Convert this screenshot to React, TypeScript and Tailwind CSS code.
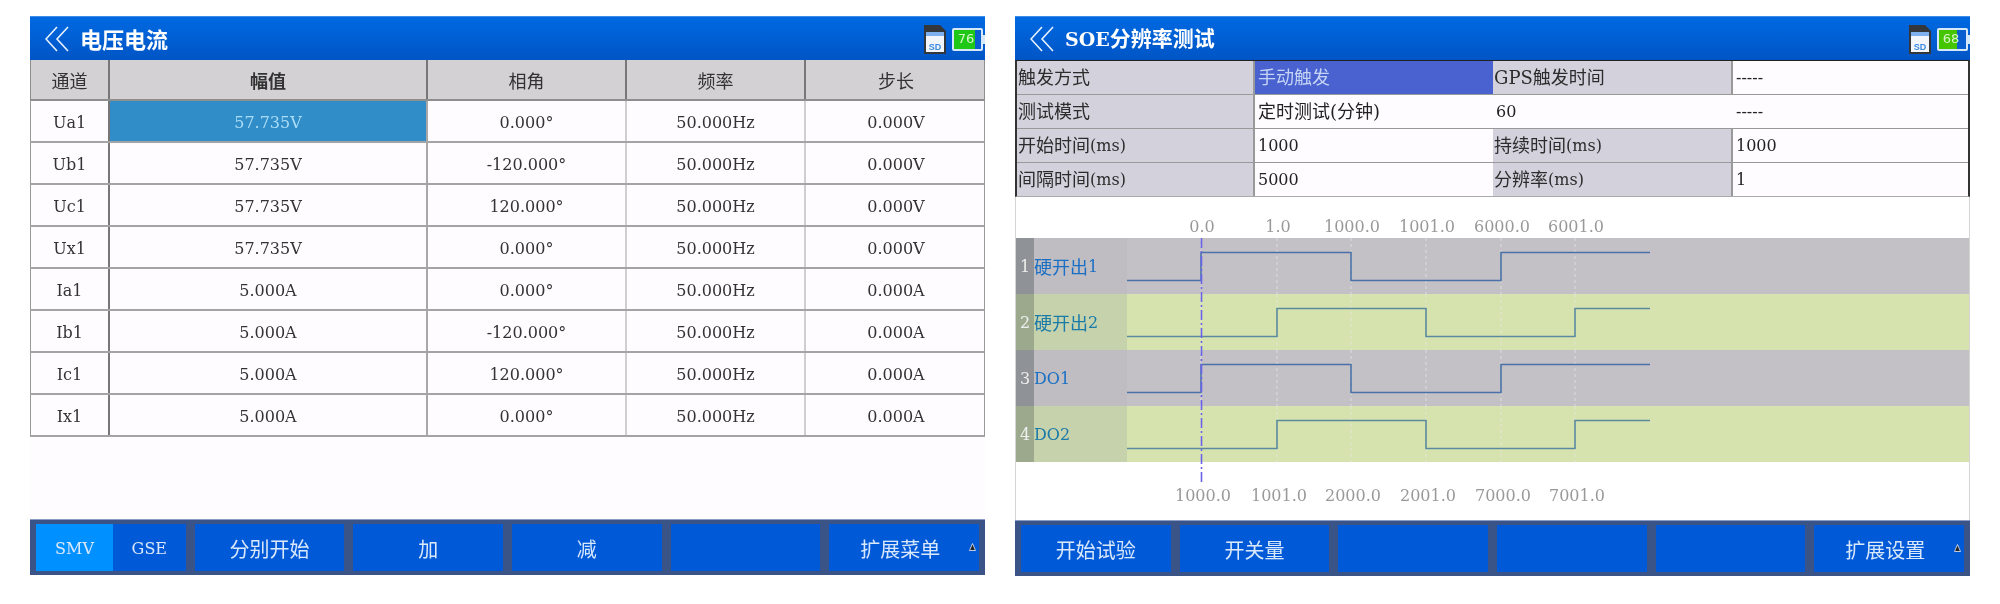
const serif = "font-['DejaVu_Serif','Noto_Sans_CJK_SC',serif]";

const channels = [
  ["Ua1", "57.735V", "0.000°", "50.000Hz", "0.000V"],
  ["Ub1", "57.735V", "-120.000°", "50.000Hz", "0.000V"],
  ["Uc1", "57.735V", "120.000°", "50.000Hz", "0.000V"],
  ["Ux1", "57.735V", "0.000°", "50.000Hz", "0.000V"],
  ["Ia1", "5.000A", "0.000°", "50.000Hz", "0.000A"],
  ["Ib1", "5.000A", "-120.000°", "50.000Hz", "0.000A"],
  ["Ic1", "5.000A", "120.000°", "50.000Hz", "0.000A"],
  ["Ix1", "5.000A", "0.000°", "50.000Hz", "0.000A"],
];

const ticks = [186, 262, 336, 411, 486, 560];
const topLabels = ["0.0", "1.0", "1000.0", "1001.0", "6000.0", "6001.0"];
const bottomLabels = ["1000.0", "1001.0", "2000.0", "2001.0", "7000.0", "7001.0"];

const signals = [
  { no: "1", name: "硬开出1", shift: false, green: false },
  { no: "2", name: "硬开出2", shift: true, green: true },
  { no: "3", name: "DO1", shift: false, green: false },
  { no: "4", name: "DO2", shift: true, green: true },
];

function Chevrons() {
  return (
    <svg width="24" height="26" viewBox="0 0 24 26" fill="none" stroke="#e8f2ff" strokeWidth="1.6">
      <polyline points="12,1 1,13 12,25" />
      <polyline points="23,1 12,13 23,25" />
    </svg>
  );
}

function SdCard() {
  return (
    <svg width="22" height="30" viewBox="0 0 22 30">
      <path d="M0 1 L16 1 L22 7 L22 30 L0 30 Z" fill="#33363a" />
      <rect x="2" y="8" width="18" height="20" fill="#f2f6fb" />
      <rect x="2" y="8" width="18" height="4" fill="#7fb0ee" />
      <text x="11" y="26" textAnchor="middle" fontSize="9" fontWeight="700" fill="#3d8ae0" fontFamily="Liberation Sans">SD</text>
    </svg>
  );
}

function Battery({ level, fill, color }: { level: string; fill: string; color: string }) {
  return (
    <div className="flex items-center">
      <div className="flex h-[23px] w-[31px] border-2 border-[#d8e8fb] bg-[#0a5fd0] rounded-[2px] relative overflow-hidden">
        <div className={`h-full ${fill} ${color}`} />
        <span className="absolute inset-0 flex items-center justify-center font-['DejaVu_Sans',sans-serif] text-[13px] text-[#d5f5c8] pr-[3px]">
          {level}
        </span>
      </div>
      <div className="w-[2px] h-[9px] bg-[#d8e8fb]" />
    </div>
  );
}

function Header({ children, battery }: { children: React.ReactNode; battery: React.ReactNode }) {
  return (
    <div className="h-[44px] shrink-0 flex items-center pl-[15px] pr-0 bg-gradient-to-b from-[#0069e2] to-[#0055c5] border-t border-[#3f8de8]">
      <Chevrons />
      <div className="ml-[11px] text-white font-semibold pb-[1px]">{children}</div>
      <div className="ml-auto flex items-center gap-[6px] pt-[1px]">
        <SdCard />
        {battery}
      </div>
    </div>
  );
}

function Footer({ children, extra }: { children?: React.ReactNode; extra: React.ReactNode }) {
  return (
    <div className="h-[56px] shrink-0 bg-[#3b5488] border-t border-[#8a9cc4] py-[4px] px-[6px] grid grid-cols-6 gap-[9px] text-[#d9e8fb] text-[20px] font-['Noto_Sans_CJK_SC',sans-serif]">
      {children}
      {extra}
    </div>
  );
}

function Btn({ label }: { label?: string }) {
  return <div className="bg-[#005ad8] flex items-center justify-center pt-[2px]">{label}</div>;
}

function ExtBtn({ label }: { label: string }) {
  return (
    <div className="bg-[#005ad8] flex items-center justify-center relative pt-[2px] pr-[8px]">
      {label}
      <svg className="absolute right-[3px] top-[19px]" width="7" height="8" viewBox="0 0 7 8">
        <path d="M3.5 0.5 L6.5 7.5 L0.5 7.5 Z" fill="#222" stroke="#e8eef8" strokeWidth="0.8" />
      </svg>
    </div>
  );
}

function VoltagePanel() {
  return (
    <div className="w-[955px] h-[559px] flex flex-col bg-[#fffcff]">
      <Header battery={<Battery level="76" fill="w-[76%]" color="bg-[#1fc716]" />}>
        <span className="text-[22px] font-['Noto_Sans_CJK_SC',sans-serif]">电压电流</span>
      </Header>
      <div className="flex-1">
        <div className="grid grid-cols-[79px_318px_199px_179px_180px] h-[41px] bg-[#d3d1d4] text-[18px] text-[#333] border-b-2 border-[#8e8e8e] border-x border-x-[#8e8e8e] font-['Noto_Sans_CJK_SC',sans-serif]">
          <div className="flex items-center justify-center border-r-2 border-[#777] pt-[1px]">通道</div>
          <div className="flex items-center justify-center border-r-2 border-[#777] pt-[1px] font-semibold">幅值</div>
          <div className="flex items-center justify-center border-r-2 border-[#777] pt-[1px]">相角</div>
          <div className="flex items-center justify-center border-r-2 border-[#777] pt-[1px]">频率</div>
          <div className="flex items-center justify-center pt-[1px]">步长</div>
        </div>
        {channels.map((row, i) => (
          <div
            key={row[0]}
            className={`grid grid-cols-[79px_318px_199px_179px_180px] h-[42px] text-[16px] text-[#333] border-b-2 border-[#a4a4a4] border-x border-x-[#999] ${serif}`}
          >
            <div className="flex items-center justify-center border-r-2 border-[#777] pt-[4px]">{row[0]}</div>
            <div
              className={
                i === 0
                  ? "flex items-center justify-center border-r-2 border-[#a8a8a8] bg-[#318dc8] text-[#a9dcf6] pt-[4px]"
                  : "flex items-center justify-center border-r-2 border-[#a8a8a8] pt-[4px]"
              }
            >
              {row[1]}
            </div>
            <div className="flex items-center justify-center border-r-2 border-[#cfcfcf] pt-[4px]">{row[2]}</div>
            <div className="flex items-center justify-center border-r-2 border-[#cfcfcf] pt-[4px]">{row[3]}</div>
            <div className="flex items-center justify-center pt-[4px]">{row[4]}</div>
          </div>
        ))}
      </div>
      <Footer extra={<ExtBtn label="扩展菜单" />}>
        <div className={`flex text-[16px] ${serif}`}>
          <div className="w-[77px] bg-[#0090ff] flex items-center justify-center pt-[2px]">SMV</div>
          <div className="flex-1 bg-[#005ad8] flex items-center justify-center pt-[2px]">GSE</div>
        </div>
        <Btn label="分别开始" />
        <Btn label="加" />
        <Btn label="减" />
        <Btn />
      </Footer>
    </div>
  );
}

function Label({ cjk, unit }: { cjk: string; unit?: string }) {
  return (
    <div className="bg-[#d3d1dc] border-r-2 border-[#999] pl-[1px] flex items-center text-[#2c2c2c]">
      <span className="text-[18px]">{cjk}</span>
      {unit}
    </div>
  );
}

function Value({ children, cls }: { children: React.ReactNode; cls?: string }) {
  return <div className={cls ?? "bg-[#fffcff] pl-[3px] flex items-center text-[#222]"}>{children}</div>;
}

function Wave({ shift, green }: { shift: boolean; green: boolean }) {
  const pts = shift
    ? "0,42.5 150,42.5 150,14.5 299,14.5 299,42.5 448,42.5 448,14.5 523,14.5"
    : "0,42.5 74,42.5 74,14.5 224,14.5 224,42.5 374,42.5 374,14.5 523,14.5";
  return (
    <svg className="flex-1 h-full" viewBox="0 0 842 56" width="842" height="56" preserveAspectRatio="none">
      {[74, 150, 224, 299, 374, 448].map((x) => (
        <line key={x} x1={x} x2={x} y1="0" y2="56" stroke="#e8e8e8" strokeWidth="1" strokeDasharray="3 3" opacity="0.7" />
      ))}
      <polyline points={pts} fill="none" stroke={green ? "#5b8a9e" : "#4a72a8"} strokeWidth="1.6" />
    </svg>
  );
}

function SoePanel() {
  return (
    <div className={`w-[955px] h-[559px] flex flex-col bg-white ${serif}`}>
      <Header battery={<Battery level="68" fill="w-[68%]" color="bg-[#45c400]" />}>
        <span className="text-[19px]">SOE</span>
        <span className="text-[21px] font-['Noto_Sans_CJK_SC',sans-serif]">分辨率测试</span>
      </Header>
      <div className="grid grid-cols-[238px_238px_240px_235px] grid-rows-[33px_33px_33px_33px] gap-y-[1px] bg-[#999] border-t border-x-2 border-t-[#222] border-x-[#333] border-b border-b-[#aaa] text-[16px]">
        <Label cjk="触发方式" />
        <Value cls="bg-[#4a62d0] pl-[3px] flex items-center text-[18px] text-[#c5d4f5]">手动触发</Value>
        <Label cjk="GPS触发时间" />
        <Value>-----</Value>
        <Label cjk="测试模式" />
        <Value>
          <span className="text-[18px]">定时测试(分钟)</span>
        </Value>
        <Value>60</Value>
        <Value>-----</Value>
        <Label cjk="开始时间" unit="(ms)" />
        <Value>1000</Value>
        <Label cjk="持续时间" unit="(ms)" />
        <Value>1000</Value>
        <Label cjk="间隔时间" unit="(ms)" />
        <Value>5000</Value>
        <Label cjk="分辨率" unit="(ms)" />
        <Value>1</Value>
      </div>
      <div className="flex-1 relative border-x border-x-[#d4d4d4] text-[16px]">
        <div className="h-[41px] relative">
          {topLabels.map((t, i) => (
            <span key={t} className="absolute top-[18px] -translate-x-1/2 text-[#999]" style={{ left: ticks[i] }}>
              {t}
            </span>
          ))}
        </div>
        {signals.map((s) => (
          <div key={s.no} className={`h-[56px] flex ${s.green ? "bg-[#d7e3ae]" : "bg-[#c3c1c5]"}`}>
            <div className={`w-[18px] flex items-center justify-center pt-[2px] text-[#eef0ee] ${s.green ? "bg-[#9ca98c]" : "bg-[#8f9296]"}`}>
              {s.no}
            </div>
            <div
              className={`w-[93px] flex items-center pt-[2px] ${s.green ? "bg-[#c6d2ac] text-[#1a7aa8]" : "bg-[#bfbdc1] text-[#1a6fc4]"}`}
            >
              {s.name.startsWith("硬") ? (
                <>
                  <span className="text-[18px]">硬开出</span>
                  {s.name.slice(3)}
                </>
              ) : (
                s.name
              )}
            </div>
            <Wave shift={s.shift} green={s.green} />
          </div>
        ))}
        <div className="h-[58px] relative">
          {bottomLabels.map((t, i) => (
            <span key={t} className="absolute top-[22px] -translate-x-1/2 text-[#999]" style={{ left: ticks[i] + 1 }}>
              {t}
            </span>
          ))}
        </div>
        <svg className="absolute left-[184px] top-[41px]" width="3" height="244">
          <line x1="1.5" x2="1.5" y1="0" y2="244" stroke="#6a63ea" strokeWidth="1.6" strokeDasharray="10 3 2 3" />
        </svg>
      </div>
      <Footer extra={<ExtBtn label="扩展设置" />}>
        <Btn label="开始试验" />
        <Btn label="开关量" />
        <Btn />
        <Btn />
        <Btn />
      </Footer>
    </div>
  );
}

export default function App() {
  return (
    <div className="w-[2000px] h-[604px] bg-white flex gap-[30px] pl-[30px] pt-[16px] overflow-hidden blur-[0.4px]">
      <VoltagePanel />
      <SoePanel />
    </div>
  );
}
